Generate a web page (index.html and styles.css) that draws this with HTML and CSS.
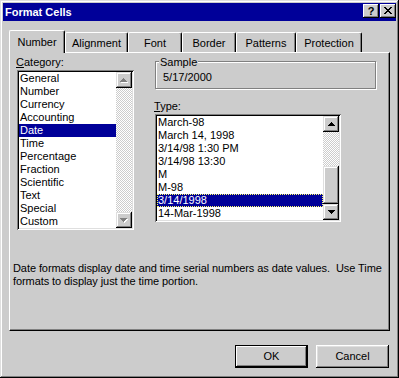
FILE: index.html
```html
<!DOCTYPE html>
<html>
<head>
<meta charset="utf-8">
<link rel="stylesheet" href="styles.css">
</head>
<body>
<div class="dialog">
  <div class="titlebar">
    <span class="title">Format Cells</span>
    <div class="tbtns">
      <span class="tbtn">?</span>
      <span class="tbtn"><svg width="8" height="7" viewBox="0 0 8 7" shape-rendering="crispEdges"><path d="M0 0h2v1h-2zM6 0h2v1h-2zM1 1h2v1h-2zM5 1h2v1h-2zM2 2h4v1h-4zM3 3h2v1h-2zM2 4h4v1h-4zM1 5h2v1h-2zM5 5h2v1h-2zM0 6h2v1h-2zM6 6h2v1h-2z" fill="#000"/></svg></span>
    </div>
  </div>
  <div class="tabs">
    <div class="tab sel w-number">Number</div>
    <div class="tab w-align">Alignment</div>
    <div class="tab w-font">Font</div>
    <div class="tab w-border">Border</div>
    <div class="tab w-patterns">Patterns</div>
    <div class="tab w-protect">Protection</div>
  </div>
  <div class="panel">
    <div class="cols">
      <div class="col-left">
        <div class="lbl"><u>C</u>ategory:</div>
        <div class="listbox cat">
          <div class="items">
            <div class="item">General</div>
            <div class="item">Number</div>
            <div class="item">Currency</div>
            <div class="item">Accounting</div>
            <div class="item sel">Date</div>
            <div class="item">Time</div>
            <div class="item">Percentage</div>
            <div class="item">Fraction</div>
            <div class="item">Scientific</div>
            <div class="item">Text</div>
            <div class="item">Special</div>
            <div class="item">Custom</div>
          </div>
          <div class="vscroll">
            <div class="sbtn"><svg width="8" height="5" viewBox="0 0 8 5" shape-rendering="crispEdges"><path d="M4 1h1v1h-1zM3 2h3v1h-3zM2 3h5v1h-5zM1 4h7v1h-7z" fill="#fff"/><path d="M3 0h1v1h-1zM2 1h3v1h-3zM1 2h5v1h-5zM0 3h7v1h-7z" fill="#808080"/></svg></div>
            <div class="track"></div>
            <div class="sbtn"><svg width="8" height="5" viewBox="0 0 8 5" shape-rendering="crispEdges"><path d="M1 1h7v1h-7zM2 2h5v1h-5zM3 3h3v1h-3zM4 4h1v1h-1z" fill="#fff"/><path d="M0 0h7v1h-7zM1 1h5v1h-5zM2 2h3v1h-3zM3 3h1v1h-1z" fill="#808080"/></svg></div>
          </div>
        </div>
      </div>
      <div class="col-right">
        <div class="group">
          <span class="legend">Sample</span>
          <div class="sample">5/17/2000</div>
        </div>
        <div class="lbl type-lbl"><u>T</u>ype:</div>
        <div class="listbox type">
          <div class="items">
            <div class="item">March-98</div>
            <div class="item">March 14, 1998</div>
            <div class="item">3/14/98 1:30 PM</div>
            <div class="item">3/14/98 13:30</div>
            <div class="item">M</div>
            <div class="item">M-98</div>
            <div class="item sel focus">3/14/1998</div>
            <div class="item">14-Mar-1998</div>
          </div>
          <div class="vscroll">
            <div class="sbtn"><svg width="7" height="4" viewBox="0 0 7 4" shape-rendering="crispEdges"><path d="M3 0h1v1h-1zM2 1h3v1h-3zM1 2h5v1h-5zM0 3h7v1h-7z" fill="#000"/></svg></div>
            <div class="track"><div class="thumb"></div></div>
            <div class="sbtn"><svg width="7" height="4" viewBox="0 0 7 4" shape-rendering="crispEdges"><path d="M0 0h7v1h-7zM1 1h5v1h-5zM2 2h3v1h-3zM3 3h1v1h-1z" fill="#000"/></svg></div>
          </div>
        </div>
      </div>
    </div>
    <div class="desc">Date formats display date and time serial numbers as date values.&nbsp; Use Time<br>formats to display just the time portion.</div>
  </div>
  <div class="buttons">
    <button class="btn default">OK</button>
    <button class="btn">Cancel</button>
  </div>
</div>
</body>
</html>
```

FILE: styles.css
```css
* { box-sizing: border-box; }

body {
  margin: 0;
  font-family: "Liberation Sans", Arial, sans-serif;
  font-size: 11px;
  line-height: 13px;
  color: #000;
}

.dialog {
  width: 399px;
  height: 378px;
  padding: 3px;
  background: #cccccc;
  box-shadow: inset -1px -1px #000, inset 1px 1px #dfdfdf, inset -2px -2px #808080, inset 2px 2px #fff;
}

.titlebar {
  height: 18px;
  background: #000099;
  display: flex;
  justify-content: space-between;
  align-items: flex-start;
  padding-left: 2px;
}

.title {
  color: #fff;
  font-weight: bold;
  line-height: 18px;
}

.tbtns {
  display: flex;
  gap: 1px;
  margin-top: 1px;
}

.tbtn {
  width: 16px;
  height: 14px;
  background: #cccccc;
  box-shadow: inset -1px -1px #000, inset 1px 1px #fff, inset -2px -2px #808080;
  display: flex;
  align-items: center;
  justify-content: center;
  font-weight: bold;
  font-size: 11px;
  line-height: 14px;
  padding-bottom: 1px;
}

.tabs {
  display: flex;
  align-items: flex-end;
  height: 22px;
  margin: 9px 0 0 6px;
}

.tab {
  height: 20px;
  padding-top: 4px;
  text-align: center;
  border: 1px solid #fff;
  border-bottom: 0;
  border-right-color: #000;
  border-radius: 2px 2px 0 0;
  box-shadow: inset -1px 0 #808080;
  white-space: nowrap;
}

.tab.sel {
  height: 23px;
  margin-bottom: -1px;
  padding-top: 5px;
  position: relative;
  z-index: 1;
  background: #cccccc;
}

.w-number { width: 56px; }
.w-align { width: 63px; }
.w-font { width: 54px; }
.w-border { width: 54px; }
.w-patterns { width: 60px; }
.w-protect { width: 66px; }

.panel {
  width: 381px;
  height: 279px;
  margin-left: 6px;
  border: 1px solid #fff;
  border-right-color: #000;
  border-bottom-color: #000;
  box-shadow: inset -1px -1px #808080;
}

.cols {
  display: flex;
  gap: 21px;
  padding: 3px 0 0 7px;
}

.lbl {
  margin-left: -1px;
  height: 13px;
}

.listbox {
  display: flex;
  background: #fff;
  padding: 2px;
  margin-top: 1px;
  box-shadow: inset 1px 1px #808080, inset -1px -1px #fff, inset 2px 2px #000, inset -2px -2px #dfdfdf;
}

.cat { width: 117px; height: 160px; }
.type { width: 186px; height: 108px; }

.items {
  flex: 1;
  min-width: 0;
}

.item {
  height: 13px;
  padding-left: 1px;
  white-space: nowrap;
  overflow: hidden;
}

.item.sel {
  background: #000099;
  color: #fff;
}

.item.focus {
  border: 1px dotted #ffff66;
  padding-left: 0;
  line-height: 11px;
}

.vscroll {
  width: 16px;
  display: flex;
  flex-direction: column;
  background: repeating-conic-gradient(#fff 0 25%, #cccccc 0 50%) 0 0 / 2px 2px;
}

.sbtn {
  height: 16px;
  flex: none;
  background: #cccccc;
  box-shadow: inset -1px -1px #000, inset 1px 1px #dfdfdf, inset -2px -2px #808080, inset 2px 2px #fff;
  display: flex;
  align-items: center;
  justify-content: center;
}

.sbtn svg { display: block; }

.track {
  flex: 1;
  display: flex;
  flex-direction: column;
}

.thumb {
  margin-top: auto;
  height: 38px;
  background: #cccccc;
  box-shadow: inset -1px -1px #000, inset 1px 1px #dfdfdf, inset -2px -2px #808080, inset 2px 2px #fff;
}

.group {
  position: relative;
  width: 221px;
  height: 28px;
  margin-top: 5px;
  border: 1px solid #808080;
  box-shadow: inset 1px 1px #fff, 1px 1px #fff;
  padding: 9px 0 0 7px;
}

.legend {
  position: absolute;
  top: -6px;
  left: 3px;
  padding: 0 1px;
  background: #cccccc;
}

.type-lbl { margin-top: 11px; }

.desc {
  margin: 32px 0 0 3px;
  white-space: nowrap;
  letter-spacing: -0.08px;
}

.buttons {
  display: flex;
  justify-content: flex-end;
  gap: 8px;
  margin-top: 14px;
  padding-right: 7px;
}

.btn {
  width: 73px;
  height: 23px;
  font: inherit;
  color: #000;
  background: #cccccc;
  border: 0;
  padding: 0;
  box-shadow: inset -1px -1px #000, inset 1px 1px #fff, inset -2px -2px #808080, inset 2px 2px #dfdfdf;
}

.btn.default {
  border: 1px solid #000;
  box-shadow: inset -1px -1px #000, inset 1px 1px #fff, inset -2px -2px #808080;
}
```
